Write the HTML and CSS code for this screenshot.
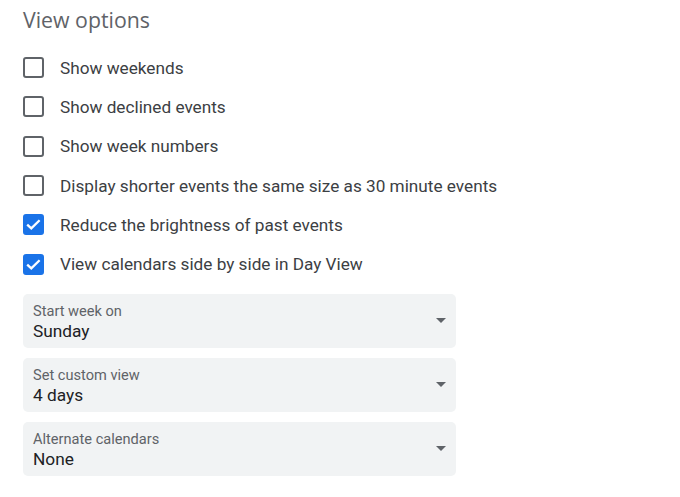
FILE: index.html
```html
<!DOCTYPE html>
<html>
<head>
<meta charset="utf-8">
<link rel="stylesheet" href="styles.css">
</head>
<body>
<div class="panel">
  <h2 class="title">View options</h2>
  <ul class="options">
    <li class="option"><span class="box"></span><span class="label">Show weekends</span></li>
    <li class="option"><span class="box"></span><span class="label">Show declined events</span></li>
    <li class="option"><span class="box"></span><span class="label">Show week numbers</span></li>
    <li class="option"><span class="box"></span><span class="label">Display shorter events the same size as 30 minute events</span></li>
    <li class="option"><span class="box checked"><svg viewBox="0 0 21 21" width="21" height="21"><path d="M4.2 10.6 L8.3 14.4 L16.6 6.2" fill="none" stroke="#fff" stroke-width="2.3"/></svg></span><span class="label">Reduce the brightness of past events</span></li>
    <li class="option"><span class="box checked"><svg viewBox="0 0 21 21" width="21" height="21"><path d="M4.2 10.6 L8.3 14.4 L16.6 6.2" fill="none" stroke="#fff" stroke-width="2.3"/></svg></span><span class="label">View calendars side by side in Day View</span></li>
  </ul>
  <div class="selects">
    <div class="select">
      <div class="sel-text"><div class="sel-label">Start week on</div><div class="sel-value">Sunday</div></div>
      <span class="arrow"></span>
    </div>
    <div class="select">
      <div class="sel-text"><div class="sel-label">Set custom view</div><div class="sel-value">4 days</div></div>
      <span class="arrow"></span>
    </div>
    <div class="select">
      <div class="sel-text"><div class="sel-label">Alternate calendars</div><div class="sel-value">None</div></div>
      <span class="arrow"></span>
    </div>
  </div>
</div>
</body>
</html>
```
FILE: styles.css
```css
html, body {
  margin: 0;
  padding: 0;
  background: #ffffff;
}
body {
  font-family: Roboto, "Liberation Sans", Arial, sans-serif;
  color: #3c4043;
}
.panel {
  padding: 5px 0 0 23px;
}
.title {
  margin: 0;
  height: 43px;
  font-family: "Open Sans", Roboto, sans-serif;
  font-weight: 400;
  font-size: 21.3px;
  line-height: 30px;
  color: #5f6368;
}
.options {
  list-style: none;
  margin: 0;
  padding: 0;
}
.option {
  display: flex;
  align-items: center;
  height: 39.3px;
}
.box {
  box-sizing: border-box;
  width: 21px;
  height: 21px;
  border: 2px solid #5f6368;
  border-radius: 3px;
  flex: none;
  position: relative;
}
.box.checked {
  background: #1a73e8;
  border-color: #1a73e8;
}
.box svg {
  display: block;
  position: absolute;
  left: -2px;
  top: -2px;
}
.label {
  margin-left: 16px;
  font-size: 17.2px;
  color: #3c4043;
}
.selects {
  margin-top: 10px;
  display: flex;
  flex-direction: column;
  gap: 10px;
  width: 433px;
}
.select {
  height: 54px;
  background: #f1f3f4;
  border-radius: 5px;
  display: flex;
  align-items: center;
  padding: 0 10px;
}
.sel-text {
  flex: 1;
  padding-top: 3px;
}
.sel-label {
  font-size: 14.6px;
  line-height: 18px;
  color: #5f6368;
}
.sel-value {
  font-size: 17.3px;
  line-height: 22px;
  color: #202124;
}
.arrow {
  width: 0;
  height: 0;
  border-left: 5px solid transparent;
  border-right: 5px solid transparent;
  border-top: 5px solid #5f6368;
}
```
